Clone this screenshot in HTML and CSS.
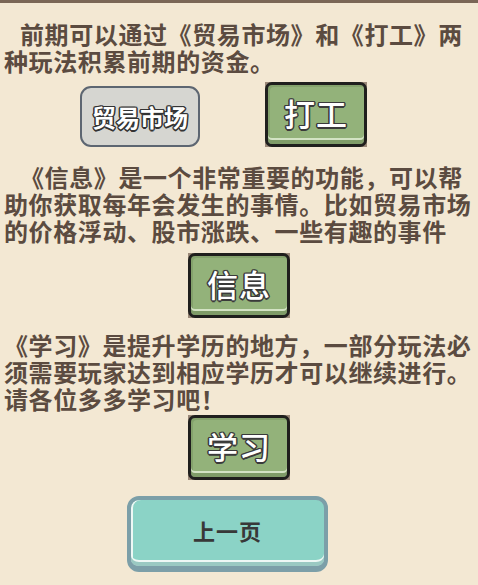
FILE: index.html
```html
<!DOCTYPE html>
<html lang="zh-CN">
<head>
<meta charset="UTF-8">
<meta name="viewport" content="width=device-width, initial-scale=1.0">
<title>玩法说明</title>
<link rel="stylesheet" href="styles.css">
</head>
<body>

<div class="page">

  <p class="text first indent">前期可以通过《贸易市场》和《打工》两种玩法积累前期的资金。</p>

  <div class="row">
    <button class="btn-grey">贸易市场</button>
    <div class="btn-green"><span>打工</span></div>
  </div>

  <p class="text second indent">《信息》是一个非常重要的功能，可以帮助你获取每年会发生的事情。比如贸易市场的价格浮动、股市涨跌、一些有趣的事件</p>

  <div class="row center info">
    <div class="btn-green"><span>信息</span></div>
  </div>

  <p class="text third">《学习》是提升学历的地方，一部分玩法必须需要玩家达到相应学历才可以继续进行。请各位多多学习吧！</p>

  <div class="row center study">
    <div class="btn-green"><span>学习</span></div>
  </div>

  <div class="row back">
    <button class="btn-back">上一页</button>
  </div>

</div>

</body>
</html>
```

FILE: styles.css
```css
body {
  margin: 0;
  background: #f3e8d3;
  font-family: "Noto Sans CJK SC", "Noto Sans", sans-serif;
}

.page {
  border-top: 3px solid #7a6656;
  height: 582px;
  overflow: hidden;
}

.text {
  margin: 0;
  padding: 0 4px;
  font-size: 24px;
  font-weight: bold;
  line-height: 27px;
  letter-spacing: 0.6px;
  color: #5b4b40;
}

.indent { text-indent: 16px; }

.first { margin-top: 17px; }
.second { margin-top: 16px; }
.third { margin-top: 13px; }

.row {
  display: flex;
  align-items: flex-end;
  gap: 65px;
  padding-left: 80px;
  margin-top: 8px;
}

.row.center {
  justify-content: center;
  padding-left: 0;
}

.info { margin-top: 9px; }
.study { margin-top: 3px; }
.back { padding-left: 127px; margin-top: 16px; }

.btn-grey {
  width: 120px;
  height: 61px;
  box-sizing: border-box;
  background: #d6d6d1;
  border: 2px solid #5d6671;
  border-radius: 11px;
  font-family: "Noto Sans CJK SC", sans-serif;
  font-size: 24px;
  font-weight: bold;
  color: #fff;
  padding: 0;
  text-shadow: 1px 1px 0 #333, -1px -1px 0 #333, 1px -1px 0 #333, -1px 1px 0 #333,
               0 1.5px 0 #333, 0 -1.5px 0 #333, 1.5px 0 0 #333, -1.5px 0 0 #333;
}

.btn-green {
  width: 102px;
  height: 65px;
  box-sizing: border-box;
  background: #9a8878;
  display: flex;
}

.btn-green span {
  flex: 1;
  display: flex;
  align-items: center;
  justify-content: center;
  padding-bottom: 5px;
  background: #93b27a;
  border: 3px solid #1f1f1d;
  border-radius: 7px;
  box-shadow: inset 0 -4px 0 #7f9c68, inset 0 -6px 0 #d3e3c4, inset 2px 2px 0 #84a26c;
  font-size: 31px;
  font-weight: 500;
  letter-spacing: 1px;
  color: #fff;
  text-shadow: 1px 1px 0 #3a3a3a, -1px -1px 0 #3a3a3a, 1px -1px 0 #3a3a3a, -1px 1px 0 #3a3a3a,
               0 1.5px 0 #3a3a3a, 0 -1.5px 0 #3a3a3a, 1.5px 0 0 #3a3a3a, -1.5px 0 0 #3a3a3a;
}

.btn-back {
  width: 201px;
  height: 76px;
  box-sizing: border-box;
  background: #8bd3c6;
  border: 4px solid #7c9fa8;
  border-bottom-width: 6px;
  border-radius: 12px;
  box-shadow: inset 0 -4px 0 #9ac9c2, inset 0 -6px 0 #eef8f5, inset 2px 0 0 #eef8f5;
  padding: 0 0 6px;
  font-family: "Noto Sans CJK SC", sans-serif;
  font-size: 22px;
  font-weight: bold;
  letter-spacing: 1px;
  color: #383838;
}
```
